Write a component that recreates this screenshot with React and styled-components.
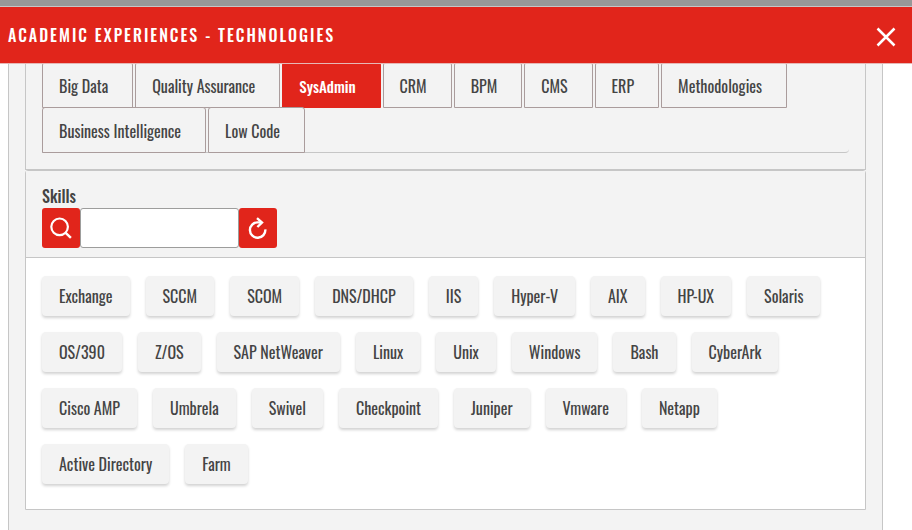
import React, { useState } from "react";
import styled, { createGlobalStyle } from "styled-components";

const red = "#e1251b";
const ink = "#444444";
const line = "#c6c6c6";
const fog = "#f3f3f3";

const GlobalStyle = createGlobalStyle`
  *, *::before, *::after { box-sizing: border-box; }
  html, body, #root { height: 100%; }
  body {
    margin: 0;
    background: #fff;
    color: ${ink};
    overflow: hidden;
  }
  body, button, input {
    font-family: "Oswald", "Liberation Sans Narrow", "Liberation Sans", sans-serif;
    font-size: 16px;
    font-weight: 400;
    line-height: 24px;
  }
`;

const Page = styled.div`
  display: flex;
  flex-direction: column;
  height: 100%;
  border-top: 6px solid #989898;
`;

const Header = styled.header`
  display: flex;
  align-items: center;
  justify-content: space-between;
  flex: none;
  height: 58px;
  padding: 0 16px 0 8px;
  background: ${red};
  border-top: 1px solid ${line};
  border-bottom: 1px solid #e6b8b6;
`;

const Title = styled.h1`
  margin: 0;
  color: #fff;
  font-size: 16px;
  font-weight: 500;
  letter-spacing: 2px;
  text-transform: uppercase;
  white-space: nowrap;
`;

const CloseButton = styled.button`
  display: flex;
  margin: 4px 0 0;
  padding: 0;
  border: 0;
  background: none;
  color: #fff;
  cursor: pointer;
`;

const Body = styled.main`
  flex: 1;
  min-height: 0;
  margin: 0 29px 0 8px;
  padding: 0 16px;
  overflow: hidden;
  background: ${fog};
  border: solid ${line};
  border-width: 0 1px;
`;

const TabPanel = styled.section`
  padding: 0 16px 16px;
  border: 1px solid ${line};
  border-top: 0;
`;

const TabList = styled.div`
  display: flex;
  flex-wrap: wrap;
  column-gap: 2px;
  margin-top: -2px;
  border-bottom: 1px solid ${line};
  border-bottom-right-radius: 4px;
`;

const Tab = styled.button`
  height: 46px;
  margin-bottom: -1px;
  padding: 2px 24px 0 16px;
  border: 1px solid ${(p) => (p["aria-selected"] ? red : "#aa9c9c")};
  border-radius: 3px 3px 0 0;
  background: ${(p) => (p["aria-selected"] ? red : fog)};
  color: ${(p) => (p["aria-selected"] ? "#fff" : ink)};
  font-size: ${(p) => (p["aria-selected"] ? 15 : 16)}px;
  font-weight: ${(p) => (p["aria-selected"] ? 500 : 400)};
  white-space: nowrap;
  cursor: pointer;
`;

const SkillsCard = styled.section`
  background: #fff;
  border: 1px solid ${line};
  border-radius: 3px 3px 0 0;
`;

const Filter = styled.form`
  padding: 13px 16px 9px;
  background: ${fog};
  border-bottom: 1px solid ${line};
`;

const FilterLabel = styled.label`
  display: block;
  font-size: 16px;
  font-weight: 500;
`;

const SearchGroup = styled.div`
  display: flex;
  height: 40px;
`;

const IconButton = styled.button`
  display: flex;
  align-items: center;
  justify-content: center;
  width: 38px;
  padding: 0;
  border: 0;
  border-radius: 3px;
  background: ${red};
  color: #fff;
  cursor: pointer;
`;

const SearchInput = styled.input`
  width: 159px;
  padding: 0 8px;
  border: 1px solid #9d9d9c;
  border-radius: 3px;
  background: #fff;
  color: ${ink};
`;

const Chips = styled.div`
  display: flex;
  flex-wrap: wrap;
  gap: 16px;
  padding: 18px 16px 25px;
`;

const Chip = styled.button`
  height: 40px;
  padding: 0 17px;
  border: 0;
  border-radius: 4px;
  background: ${fog};
  box-shadow: 0 2px 3px rgba(0, 0, 0, 0.18);
  color: ${ink};
  white-space: nowrap;
  cursor: pointer;
`;

const tabs = [
  "Big Data", "Quality Assurance", "SysAdmin", "CRM", "BPM", "CMS", "ERP",
  "Methodologies", "Business Intelligence", "Low Code",
];

const skills = [
  "Exchange", "SCCM", "SCOM", "DNS/DHCP", "IIS", "Hyper-V", "AIX", "HP-UX",
  "Solaris", "OS/390", "Z/OS", "SAP NetWeaver", "Linux", "Unix", "Windows",
  "Bash", "CyberArk", "Cisco AMP", "Umbrela", "Swivel", "Checkpoint",
  "Juniper", "Vmware", "Netapp", "Active Directory", "Farm",
];

function CloseIcon() {
  return (
    <svg width="20" height="20" viewBox="0 0 20 20" fill="none" stroke="currentColor" strokeWidth="2.5" aria-hidden="true">
      <path d="M1.5 1.5l17 17M18.5 1.5l-17 17" />
    </svg>
  );
}

function SearchIcon() {
  return (
    <svg width="22" height="22" viewBox="0 0 22 22" fill="none" stroke="currentColor" strokeWidth="2.2" aria-hidden="true">
      <circle cx="9.6" cy="9.8" r="8.3" />
      <path d="M15.4 15.6l5.5 5.2" strokeWidth="2.5" />
    </svg>
  );
}

function ReloadIcon() {
  return (
    <svg width="20" height="22" viewBox="0 0 20 22" fill="none" stroke="currentColor" strokeWidth="2.4" aria-hidden="true">
      <path d="M17.3 12.4A7.7 7.7 0 1 1 9.8 5.4H13.5" />
      <path d="M9 1.2l5 4.3-4.6 4.5" />
    </svg>
  );
}

export default function App() {
  const [selected, setSelected] = useState("SysAdmin");
  const [query, setQuery] = useState("");

  return (
    <Page>
      <GlobalStyle />
      <Header>
        <Title>Academic experiences - Technologies</Title>
        <CloseButton type="button" aria-label="Close"><CloseIcon /></CloseButton>
      </Header>
      <Body>
        <TabPanel>
          <TabList role="tablist">
            {tabs.map((name) => (
              <Tab key={name} type="button" role="tab"
                aria-selected={name === selected} onClick={() => setSelected(name)}>
                {name}
              </Tab>
            ))}
          </TabList>
        </TabPanel>
        <SkillsCard>
          <Filter onSubmit={(e) => e.preventDefault()}>
            <FilterLabel htmlFor="skill-search">Skills</FilterLabel>
            <SearchGroup>
              <IconButton type="submit" aria-label="Search"><SearchIcon /></IconButton>
              <SearchInput id="skill-search" type="text" value={query} onChange={(e) => setQuery(e.target.value)} />
              <IconButton type="button" aria-label="Reset" onClick={() => setQuery("")}><ReloadIcon /></IconButton>
            </SearchGroup>
          </Filter>
          <Chips>
            {skills.map((name) => (
              <Chip key={name} type="button">{name}</Chip>
            ))}
          </Chips>
        </SkillsCard>
      </Body>
    </Page>
  );
}
